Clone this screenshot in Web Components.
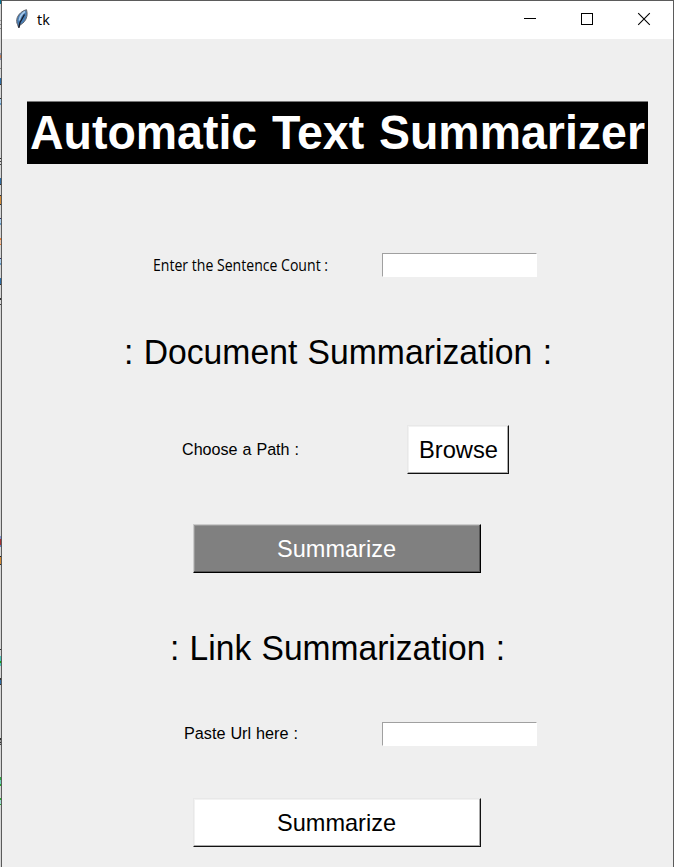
<!DOCTYPE html>
<html lang="en"><head><meta charset="utf-8"><title>tk</title>
<style>
html,body{margin:0;height:100%;overflow:hidden}
body{background:#efefef;font-family:"Liberation Sans",Arial,sans-serif;color:#000}
</style></head><body>
<tk-window>
  <tk-titlebar slot="bar">tk</tk-titlebar>
  <tk-banner><tk-text size="48" fit="615" weight="700" gap="2" squeeze>Automatic Text Summarizer</tk-text></tk-banner>
  <tk-row style="--top:89px;--h:24px">
    <tk-text slot="label" face="ui" size="15.8" fit="175" squeeze>Enter the Sentence Count :</tk-text>
    <tk-entry></tk-entry>
  </tk-row>
  <tk-heading style="--top:54px"><tk-text size="35" fit="428" gap="1" squeeze>: Document Summarization :</tk-text></tk-heading>
  <tk-row style="--top:53px;--h:49px">
    <tk-text slot="label" size="16.8" fit="117" gap="0.5" squeeze>Choose a Path :</tk-text>
    <tk-button style="--w:102px;margin-right:3px"><tk-text size="24" fit="79" squeeze>Browse</tk-text></tk-button>
  </tk-row>
  <tk-button tone="dark" style="--w:288px;margin-top:50px;margin-right:2px"><tk-text size="24" fit="119" squeeze>Summarize</tk-text></tk-button>
  <tk-heading style="--top:54px"><tk-text size="35" fit="335" gap="1" squeeze>: Link Summarization :</tk-text></tk-heading>
  <tk-row style="--top:54px;--h:24px">
    <tk-text slot="label" size="16.8" fit="114" gap="0.5" squeeze>Paste Url here :</tk-text>
    <tk-entry></tk-entry>
  </tk-row>
  <tk-button style="--w:288px;margin-top:52px;margin-right:2px"><tk-text size="24" fit="119" squeeze>Summarize</tk-text></tk-button>
</tk-window>
<script>
const define = (name, html, ready) => customElements.define(name, class extends HTMLElement {
  constructor() {
    super();
    this.attachShadow({mode: 'open'}).innerHTML = html;
  }
  connectedCallback() { if (ready) ready(this, this.shadowRoot); }
});

define('tk-window', `<style>
:host{display:grid;grid-template-columns:1px 1fr;height:100vh;overflow:hidden}
.edge{background:linear-gradient(
#087090 0 4px,#d6d6d6 0 20px,#999 0 21px,#d6d6d6 0 24px,#888 0 25px,#d6d6d6 0 28px,#888 0 29px,#d6d6d6 0 53px,
#8190ad 0 55px,#c47a50 0 58px,#8a90b0 0 60px,#d6d6d6 0 68px,#888 0 69px,#d6d6d6 0 78px,
#2e6da4 0 84px,#333 0 85px,#d6d6d6 0 98px,#333 0 99px,#a8cdea 0 103px,#6399c4 0 105px,#d6d6d6 0 158px,
#333 0 159px,#d6d6d6 0 161px,#444 0 162px,#d6d6d6 0 164px,#444 0 165px,#d6d6d6 0 178px,
#2e6da4 0 184px,#333 0 185px,#d6d6d6 0 195px,#333 0 196px,#d48b35 0 204px,#333 0 205px,#d6d6d6 0 218px,
#336 0 219px,#a8cdea 0 223px,#6399c4 0 225px,#d6d6d6 0 238px,#e47a30 0 240px,#ecc0a0 0 244px,#e47a30 0 245px,#d6d6d6 0 258px,
#336 0 259px,#a8cdea 0 263px,#6399c4 0 265px,#d6d6d6 0 278px,#2e6da4 0 284px,#333 0 285px,#d6d6d6 0 298px,
#333 0 300px,#d6d6d6 0 304px,#444 0 305px,#d6d6d6 0 536px,
#8190cd 0 539px,#a53030 0 545px,#6080c0 0 547px,#d6d6d6 0 556px,#222 0 557px,#d48b35 0 564px,#333 0 565px,#d6d6d6 0 649px,
#333 0 650px,#d6d6d6 0 656px,#50c4b8 0 661px,#169c16 0 663px,#50c4b8 0 666px,#d6d6d6 0 678px,
#333 0 680px,#2e6da4 0 684px,#333 0 685px,#d6d6d6 0 738px,#333 0 740px,#999 0 742px,#333 0 743px,#aaa 0 744px,#444 0 745px,#d6d6d6 0 777px,
#2aaa40 0 780px,#70cdb8 0 784px,#2aaa30 0 786px,#d6d6d6 0 798px,#2aaa30 0 800px,#a0d8d0 0 804px,#2aaa30 0 805px,#d6d6d6 0)}
.frame{box-sizing:border-box;border:1px solid #5b5b5b;border-bottom:0;background:#efefef;display:flex;flex-direction:column;min-width:0}
.body{display:flex;flex-direction:column;align-items:center;padding-top:62px}
</style><div class="edge"></div><div class="frame"><slot name="bar"></slot><div class="body"><slot></slot></div></div>`);

define('tk-titlebar', `<style>
:host{display:flex;align-items:center;height:38px;background:#fff;font:14.5px "Open Sans","Noto Sans",sans-serif;padding:0 22px 0 13px}
.t{flex:1;padding-left:8px;line-height:38px}
svg{display:block;flex:none}
.c{display:flex;gap:43px;padding-bottom:2px}
.f{padding-bottom:2px}
</style>
<svg class="f" width="14" height="20" viewBox="0 0 14 20"><path d="M11.5.7C7.5 1.5 3.5 5 2.2 8.7c-.9 2.800-.6 5 .4 7l1.200 3.300 1.200-3c3.400-1.500 6-4.700 6.800-8.500.5-2.300.3-4.500-.3-6.800z" fill="#4a7fb5" stroke="#66666c" stroke-width="1"/><path d="M10 2.500C7 4.500 4.800 7.500 4.300 11.500" stroke="#a9c9e8" stroke-width="1.600" fill="none"/><path d="M9.500 5.500L5 13.500l-1.200 5" stroke="#151b2b" stroke-width="1.300" fill="none"/></svg>
<span class="t"><slot></slot></span>
<span class="c">
<svg width="14" height="14" shape-rendering="crispEdges"><path d="M1 6.500h12" stroke="#000"/></svg>
<svg width="14" height="14" shape-rendering="crispEdges"><path d="M1.500 1.500h11v11h-11z" fill="none" stroke="#000"/></svg>
<svg width="14" height="14"><path d="M1.200 1.200l11.600 11.600M12.800 1.200L1.200 12.800" stroke="#000" stroke-width="1.100"/></svg>
</span>`);

define('tk-text', `<style>
:host{display:inline-flex;justify-content:flex-start;white-space:pre;line-height:1}
span{display:inline-block;transform-origin:0 50%}
</style><span><slot></slot></span>`, (el, root) => {
  const span = root.querySelector('span');
  const fit = parseFloat(el.getAttribute('fit'));
  el.style.fontSize = el.getAttribute('size') + 'px';
  el.style.fontWeight = el.getAttribute('weight') || 400;
  el.style.wordSpacing = (el.getAttribute('gap') || 0) + 'px';
  if (el.getAttribute('face') === 'ui') el.style.fontFamily = '"Open Sans","Noto Sans",sans-serif';
  requestAnimationFrame(() => {
    const natural = span.getBoundingClientRect().width;
    if (el.hasAttribute('squeeze')) span.style.transform = `scaleX(${fit / natural})`;
    else span.style.letterSpacing = (fit - natural) / el.textContent.length + 'px';
    el.style.width = fit + 'px';
  });
});

define('tk-banner', `<style>
:host{display:flex;box-sizing:border-box;align-items:center;justify-content:center;width:621px;height:63px;background:#000;color:#fff;border-top:1px solid #777}
</style><slot></slot>`);

define('tk-heading', `<style>
:host{display:flex;align-items:center;justify-content:center;height:41px;margin-top:var(--top)}
</style><slot></slot>`);

define('tk-row', `<style>
:host{display:grid;grid-template-columns:219px 219px;height:var(--h);margin-top:var(--top);padding-left:25px;align-items:center}
div{display:flex;justify-content:center;align-items:center}
.l{padding-top:1px}
</style><div class="l"><slot name="label"></slot></div><div><slot></slot></div>`);

define('tk-entry', `<style>
:host{display:block;box-sizing:border-box;width:155px;height:24px;background:#fff;border:1px solid #fff;border-top-color:#a0a0a0;border-left-color:#a0a0a0}
</style>`);

define('tk-button', `<style>
:host{display:flex;box-sizing:border-box;align-items:center;justify-content:center;width:var(--w);height:49px;background:#fff;
border:1px solid;border-color:#e8e8e8 #111 #111 #e8e8e8;box-shadow:inset -1px -1px #aaa,inset 1px 1px #f2f2f2}
:host([tone=dark]){background:#808080;color:#fff;border-color:#ccc #000 #000 #ccc;box-shadow:inset -1px -1px #555,inset 1px 1px #999}
</style><slot></slot>`);
</script>
</body></html>
